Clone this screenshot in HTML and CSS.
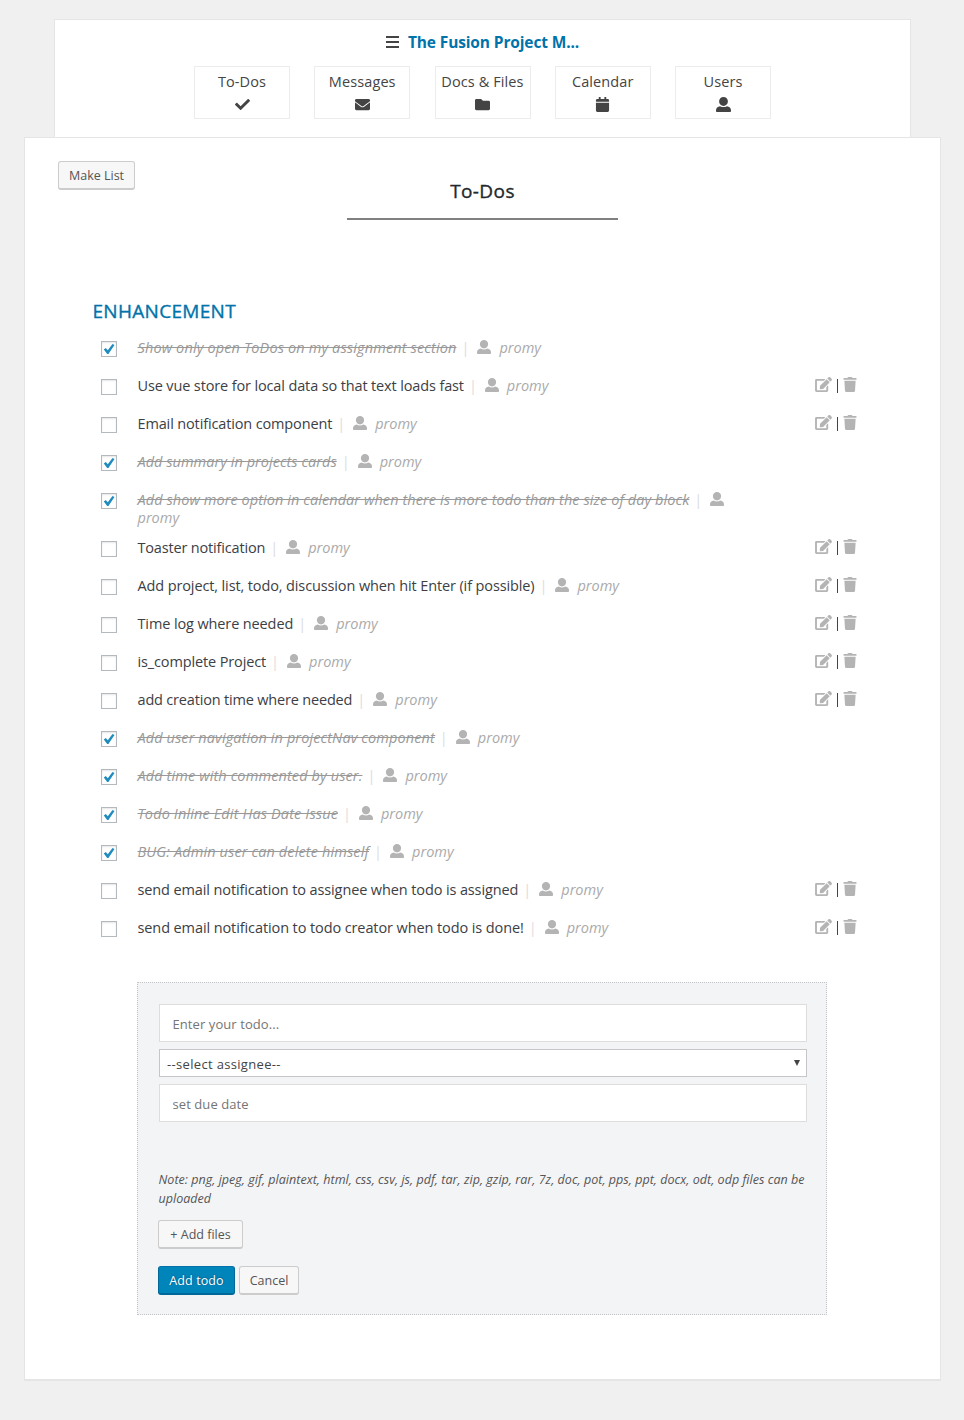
FILE: index.html
```html
<!DOCTYPE html>
<html lang="en">
<head>
<meta charset="utf-8">
<title>To-Dos</title>
<link rel="stylesheet" href="styles.css">
</head>
<body>
<svg class="sprite" aria-hidden="true">
  <symbol id="user" viewBox="0 0 16 16"><path d="M8 0a4.7 4.7 0 0 1 4.7 4.9c0 2.600-2 4.700-4.700 4.700S3.300 7.500 3.300 4.900A4.700 4.700 0 0 1 8 0zM4.300 9.800c2.200 1.300 5.200 1.300 7.400 0 2.500.2 4.300 2 4.300 4.200v.8c0 .7-.5 1.200-1.200 1.200H1.200C.5 16 0 15.500 0 14.800V14c0-2.200 1.800-4 4.300-4.200z"/></symbol>
  <symbol id="edit" viewBox="0 0 576 512"><path d="M402.600 83.200l90.200 90.200c3.800 3.800 3.800 10 0 13.800L274.400 405.600l-92.800 10.300c-12.400 1.400-22.900-9.100-21.500-21.500l10.300-92.800L388.800 83.200c3.800-3.800 10-3.800 13.800 0zm162-22.900l-48.800-48.800c-15.200-15.200-39.900-15.200-55.200 0l-35.400 35.400c-3.800 3.800-3.800 10 0 13.800l90.200 90.200c3.800 3.800 10 3.800 13.800 0l35.400-35.400c15.200-15.300 15.200-40 0-55.200zM384 346.200V448H64V128h229.800c3.200 0 6.200-1.300 8.500-3.500l40-40c7.600-7.600 2.200-20.500-8.500-20.500H48C21.500 64 0 85.500 0 112v352c0 26.500 21.500 48 48 48h352c26.500 0 48-21.500 48-48V306.200c0-10.700-12.900-16-20.500-8.500l-40 40c-2.200 2.300-3.500 5.300-3.500 8.500z"/></symbol>
  <symbol id="trash" viewBox="0 0 448 512"><path d="M432 32H312l-9.400-18.700A24 24 0 0 0 281.100 0H166.800a23.700 23.700 0 0 0-21.400 13.300L136 32H16A16 16 0 0 0 0 48v32a16 16 0 0 0 16 16h416a16 16 0 0 0 16-16V48a16 16 0 0 0-16-16zM32 128l21.200 339a48 48 0 0 0 47.900 45h245.800a48 48 0 0 0 47.900-45L416 128z"/></symbol>
  <symbol id="check" viewBox="0 0 512 512"><path d="M173.900 439.400L7.500 273c-10-10-10-26.200 0-36.200l36.200-36.200c10-10 26.200-10 36.200 0L192 312.700 432.100 72.600c10-10 26.200-10 36.200 0l36.200 36.200c10 10 10 26.200 0 36.200L210.100 439.400c-10 10-26.200 10-36.200 0z"/></symbol>
  <symbol id="mail" viewBox="0 0 512 512"><path d="M502.300 190.800c3.900-3.100 9.700-.2 9.700 4.700V400c0 26.500-21.500 48-48 48H48c-26.500 0-48-21.500-48-48V195.600c0-5 5.700-7.800 9.700-4.700 22.400 17.400 52.100 39.500 154.100 113.600 21.100 15.400 56.700 47.800 92.200 47.600 35.700.3 72-32.800 92.300-47.600 102-74.100 131.600-96.300 154-113.700zM256 320c23.200.4 56.600-29.200 73.400-41.400 132.700-96.300 142.800-104.700 173.400-128.700 5.800-4.500 9.200-11.500 9.200-18.900v-19c0-26.500-21.500-48-48-48H48c-26.500 0-48 21.500-48 48v19c0 7.400 3.400 14.300 9.200 18.900 30.600 23.900 40.700 32.400 173.400 128.700 16.800 12.200 50.200 41.800 73.400 41.400z"/></symbol>
  <symbol id="folder" viewBox="0 0 512 512"><path d="M464 128H272l-64-64H48C21.500 64 0 85.500 0 112v288c0 26.500 21.500 48 48 48h416c26.500 0 48-21.500 48-48V176c0-26.500-21.500-48-48-48z"/></symbol>
  <symbol id="calendar" viewBox="0 0 448 512"><path d="M12 192h424c6.600 0 12 5.400 12 12v260c0 26.500-21.500 48-48 48H48c-26.500 0-48-21.500-48-48V204c0-6.600 5.400-12 12-12zm436-44v-36c0-26.500-21.500-48-48-48h-48V12c0-6.600-5.400-12-12-12h-40c-6.600 0-12 5.400-12 12v52H160V12c0-6.600-5.400-12-12-12h-40c-6.600 0-12 5.400-12 12v52H48C21.500 64 0 85.500 0 112v36c0 6.600 5.400 12 12 12h424c6.600 0 12-5.400 12-12z"/></symbol>
  <symbol id="tick" viewBox="0 0 12 12"><path d="M.8 6.400l2-1.400 2 2.300L9.500.9l2 1L5.400 10.900H4.200z"/></symbol>
</svg>

<header class="project">
  <div class="project-name"><svg class="bars" viewBox="0 0 13 12"><path d="M0 0h13v2H0zM0 5h13v2H0zM0 10h13v2H0z"/></svg><a>The Fusion Project M...</a></div>
  <nav class="tabs">
    <a class="tab"><span>To-Dos</span><svg><use href="#check"/></svg></a>
    <a class="tab"><span>Messages</span><svg><use href="#mail"/></svg></a>
    <a class="tab"><span>Docs &amp; Files</span><svg><use href="#folder"/></svg></a>
    <a class="tab"><span>Calendar</span><svg><use href="#calendar"/></svg></a>
    <a class="tab"><span>Users</span><svg><use href="#user"/></svg></a>
  </nav>
</header>

<main class="panel">
  <div class="panel-head">
    <button class="btn make">Make List</button>
    <h1>To-Dos</h1>
  </div>
  <h2>ENHANCEMENT</h2>
  <ul class="todos" id="todos"></ul>

  <form class="new-todo">
    <input class="field" type="text" placeholder="Enter your todo...">
    <div class="select"><span>--select assignee--</span><i></i></div>
    <input class="field" type="text" placeholder="set due date">
    <p class="note">Note: png, jpeg, gif, plaintext, html, css, csv, js, pdf, tar, zip, gzip, rar, 7z, doc, pot, pps, ppt, docx, odt, odp files can be<br>uploaded</p>
    <div class="files"><button type="button" class="btn add">+ Add files</button></div>
    <div class="actions"><button type="button" class="btn primary">Add todo</button><button type="button" class="btn cancel">Cancel</button></div>
  </form>
</main>
<script src="app.js"></script>
</body>
</html>
```

FILE: styles.css
```css
* { box-sizing: border-box; }
body {
  margin: 0;
  padding: 19px 23px 39px 24px;
  background: #f0f0f0;
  color: #444;
  font-family: "Open Sans", "Noto Sans", sans-serif;
}
svg { fill: currentColor; }
.sprite { display: none; }

.project {
  height: 118px;
  margin: 0 30px;
  padding-top: 12px;
  background: #fff;
  border: 1px solid #e5e5e5;
  border-bottom: 0;
}
.project-name {
  display: flex;
  justify-content: center;
  align-items: center;
  gap: 9px;
  height: 20px;
  font-size: 15.5px;
  font-weight: 700;
  color: #0073aa;
  letter-spacing: -0.13px;
}
.bars { width: 13px; height: 12px; color: #444; }
.tabs {
  display: flex;
  justify-content: center;
  gap: 24.25px;
  margin-top: 14px;
}
.tab {
  display: flex;
  flex-direction: column;
  align-items: center;
  width: 96px;
  height: 53px;
  padding-top: 5px;
  border: 1px solid #ececec;
  font-size: 14.5px;
  line-height: 20px;
  letter-spacing: 0.1px;
  white-space: nowrap;
}
.tab svg { width: 15px; height: 15px; margin-top: 5px; }

.panel {
  height: 1244px;
  padding: 23px 33px 0;
  background: #fff;
  border: 1px solid #e5e5e5;
  border-bottom-width: 2px;
}
.panel-head {
  display: grid;
  grid-template-columns: 289px 271px;
  align-items: start;
  height: 137px;
}
h1, h2 {
  margin: 0;
  font-size: 19px;
  line-height: 26px;
  font-weight: 400;
  -webkit-text-stroke: 0.35px currentColor;
}
h1 {
  height: 59px;
  padding-top: 17px;
  border-bottom: 2px solid #808080;
  text-align: center;
  color: #23282d;
  letter-spacing: 0.4px;
}
h2 {
  margin-left: 34.5px;
  color: #0073aa;
  letter-spacing: 0.3px;
}
.btn {
  height: 29px;
  padding: 0;
  background: #f7f7f7;
  border: 1px solid #ccc;
  border-bottom-width: 2px;
  border-radius: 3px;
  color: #555;
  font: 12.5px/25px "Open Sans", "Noto Sans", sans-serif;
}
.make { width: 77px; }
.add { width: 85px; }
.cancel { width: 60px; }
.primary {
  width: 77px;
  background: #0085ba;
  border-color: #0073aa #006799 #006799;
  color: #fff;
  letter-spacing: 0.1px;
  text-shadow: 0 -1px 1px #006799, 1px 0 1px #006799;
}

.todos {
  margin: 15px 0 0 43px;
  padding: 0;
  list-style: none;
}
.todo {
  display: grid;
  grid-template-columns: 36.5px 610px 1fr;
  min-height: 38px;
  padding-bottom: 12px;
  font-size: 14.5px;
  line-height: 18px;
}
.box {
  width: 16px;
  height: 16px;
  margin-top: 2px;
  border: 1px solid #b4b9be;
  box-shadow: inset 0 1px 2px rgba(0, 0, 0, 0.1);
  color: #1e8cbe;
}
.box svg { display: block; width: 12px; height: 12px; margin: 1px; }
.title { color: #3c4045; }
.done .title { font-style: italic; color: #999; text-decoration: line-through; }
.sep { margin: 0 8px 0 5px; color: #ddd; }
.who { width: 14px; height: 14px; margin-right: 8px; color: #b4b4b4; vertical-align: -1px; }
.name { font-style: italic; color: #aaa; }
.tools {
  display: flex;
  justify-self: start;
  margin-left: 67px;
  height: 18px;
  color: #b4b4b4;
}
.tools .edit { width: 17px; height: 15px; }
.tools .trash { width: 14px; height: 15px; }
.tools i { width: 1px; height: 14px; margin: 2px 5px 0; background: #444; }

.new-todo {
  width: 690px;
  height: 333px;
  margin: 25px 0 0 79px;
  padding: 21px 19px 0 20px;
  background: #f3f4f6;
  border: 1px dotted #c3c4c7;
}
.field, .select {
  display: block;
  width: 648px;
  margin: 0 0 7px 1px;
  background: #fff;
  border: 1px solid #ddd;
  font: 13px "Open Sans", "Noto Sans", sans-serif;
}
.field { height: 38px; padding: 2px 12.5px 0; letter-spacing: 0.08px; }
.field::placeholder { color: #757575; opacity: 1; }
.select {
  display: flex;
  justify-content: space-between;
  height: 28px;
  padding: 1px 6px 0 7px;
  border-color: #c6c6ca;
  line-height: 27px;
  color: #444;
  letter-spacing: 0.33px;
}
.select i {
  width: 6px;
  height: 6px;
  margin-top: 9px;
  background: #444;
  clip-path: polygon(0 0, 100% 0, 50% 100%);
}
.note {
  margin: 48px 0 12px 0.5px;
  font-size: 12.5px;
  line-height: 19px;
  font-style: italic;
  color: #555;
  letter-spacing: 0.03px;
  white-space: nowrap;
}
.files, .actions { display: flex; gap: 4px; }
.actions { margin-top: 17px; }
```

FILE: app.js
```js
// [title, done, letter spacing in px]
const todos = [
  ["Show only open ToDos on my assignment section", 1, 0.13],
  ["Use vue store for local data so that text loads fast", 0, -0.135],
  ["Email notification component", 0, -0.14],
  ["Add summary in projects cards", 1, 0.03],
  ["Add show more option in calendar when there is more todo than the size of day block", 1, 0.07],
  ["Toaster notification", 0, -0.17],
  ["Add project, list, todo, discussion when hit Enter (if possible)", 0, -0.12],
  ["Time log where needed", 0, -0.12],
  ["is_complete Project", 0, -0.13],
  ["add creation time where needed", 0, -0.18],
  ["Add user navigation in projectNav component", 1, 0.1],
  ["Add time with commented by user.", 1, 0.11],
  ["Todo Inline Edit Has Date Issue", 1, 0.13],
  ["BUG: Admin user can delete himself", 1, 0.12],
  ["send email notification to assignee when todo is assigned", 0, -0.115],
  ["send email notification to todo creator when todo is done!", 0, -0.1]
];
document.getElementById("todos").innerHTML = todos.map(([title, done, ls]) => `
  <li class="todo${done ? " done" : ""}">
    <span class="box">${done ? '<svg><use href="#tick"/></svg>' : ""}</span>
    <span><span class="title" style="letter-spacing:${ls}px">${title}</span><span class="sep">|</span><svg class="who"><use href="#user"/></svg><wbr><span class="name">promy</span></span>
    ${done ? "" : '<span class="tools"><svg class="edit"><use href="#edit"/></svg><i></i><svg class="trash"><use href="#trash"/></svg></span>'}
  </li>`).join("");
```
